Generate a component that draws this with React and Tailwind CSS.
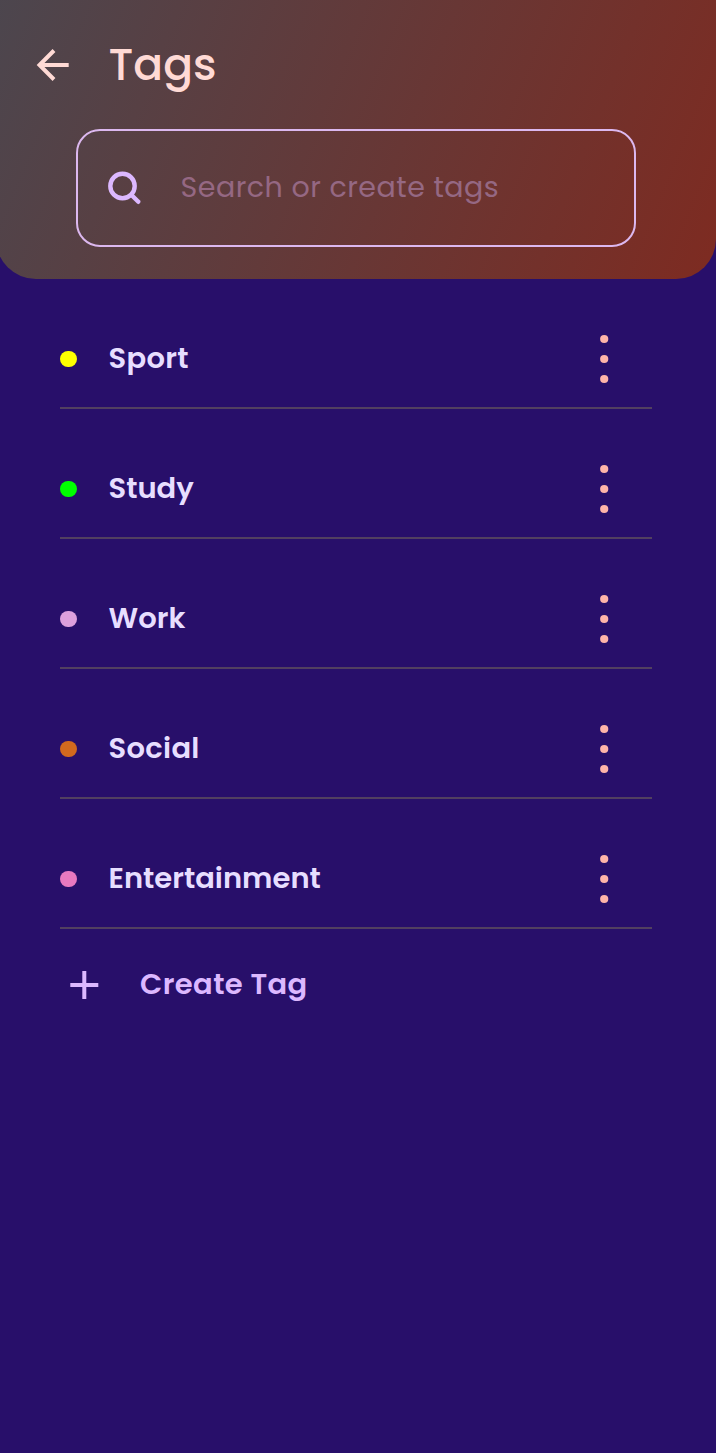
const tags = [
  { name: 'Sport', dot: 'bg-[#ffff00]', tracking: 'tracking-[0.3px]' },
  { name: 'Study', dot: 'bg-[#00ff00]', tracking: 'tracking-[0px]' },
  { name: 'Work', dot: 'bg-[#dda0dd]', tracking: 'tracking-[0px]' },
  { name: 'Social', dot: 'bg-[#d2691e]', tracking: 'tracking-[0.3px]' },
  { name: 'Entertainment', dot: 'bg-[#e879c0]', tracking: 'tracking-[0px]' },
];

function BackIcon() {
  return (
    <svg className="h-8 w-8 shrink-0 overflow-visible" viewBox="0 0 32 32" fill="none" stroke="#ffdad5" strokeWidth="4">
      <path d="M32.700 16H3.500M18 1.500L3.500 16l14.500 14.500" />
    </svg>
  );
}

function SearchIcon() {
  return (
    <svg className="h-9 w-9 shrink-0" viewBox="0 0 36 36" fill="none" stroke="#dcb8ff" strokeWidth="4.400" strokeLinecap="round">
      <circle cx="16.500" cy="16" r="12.200" />
      <path d="M25.500 25l6.800 6.800" />
    </svg>
  );
}

function MoreIcon() {
  return (
    <svg className="h-12 w-2 shrink-0 overflow-visible" viewBox="0 0 8 48" fill="#ffb4a9">
      <circle cx="4.200" cy="4" r="4.100" />
      <circle cx="4.200" cy="24" r="4.100" />
      <circle cx="4.200" cy="44" r="4.100" />
    </svg>
  );
}

function TagRow({ tag }) {
  return (
    <li className="flex h-[130px] items-end border-b-2 border-[#524060] pb-6">
      <div className="flex h-12 w-full items-center pr-11">
        <span className={`h-4 w-[16.5px] shrink-0 rounded-full ${tag.dot}`} />
        <span className={`ml-8 flex-1 pb-0.5 text-[29px] leading-[42px] font-semibold text-[#e7deff] ${tag.tracking}`}>
          {tag.name}
        </span>
        <MoreIcon />
      </div>
    </li>
  );
}

export default function App() {
  return (
    <div className="min-h-[1453px] overflow-hidden bg-[#280f6a] font-['Poppins','Inter',sans-serif]">
      <header className="-ml-1 h-[279px] rounded-b-[40px] bg-[linear-gradient(112deg,#4c464e_0%,#7e2b21_100%)]">
        <div className="flex h-[129px] items-center pl-10">
          <BackIcon />
          <h1 className="ml-[40.5px] text-[44px] leading-[64px] font-medium text-[#ffdad5]">Tags</h1>
        </div>
        <div className="ml-20 flex h-[118px] w-[560px] items-center rounded-[24px] border-2 border-[#dcb8ef] pl-7">
          <SearchIcon />
          <span className="ml-[38.5px] pb-0.5 text-[28.5px] leading-[42px] tracking-[0.5px] text-[#956883]">Search or create tags</span>
        </div>
      </header>
      <main className="mr-16 ml-[60px]">
        <ul>
          {tags.map((tag) => (
            <TagRow key={tag.name} tag={tag} />
          ))}
        </ul>
        <button className="mt-[34px] flex items-center pl-2.5 text-[#dcb8ff]">
          <svg className="h-7 w-7 shrink-0 overflow-visible" viewBox="0 0 28 28" stroke="#dcb8ff" strokeWidth="4">
            <path d="M0.300 14h28M14.300 0v28" />
          </svg>
          <span className="ml-[42px] pb-0.5 text-[29px] leading-[42px] font-semibold tracking-[0.4px]">Create Tag</span>
        </button>
      </main>
    </div>
  );
}
